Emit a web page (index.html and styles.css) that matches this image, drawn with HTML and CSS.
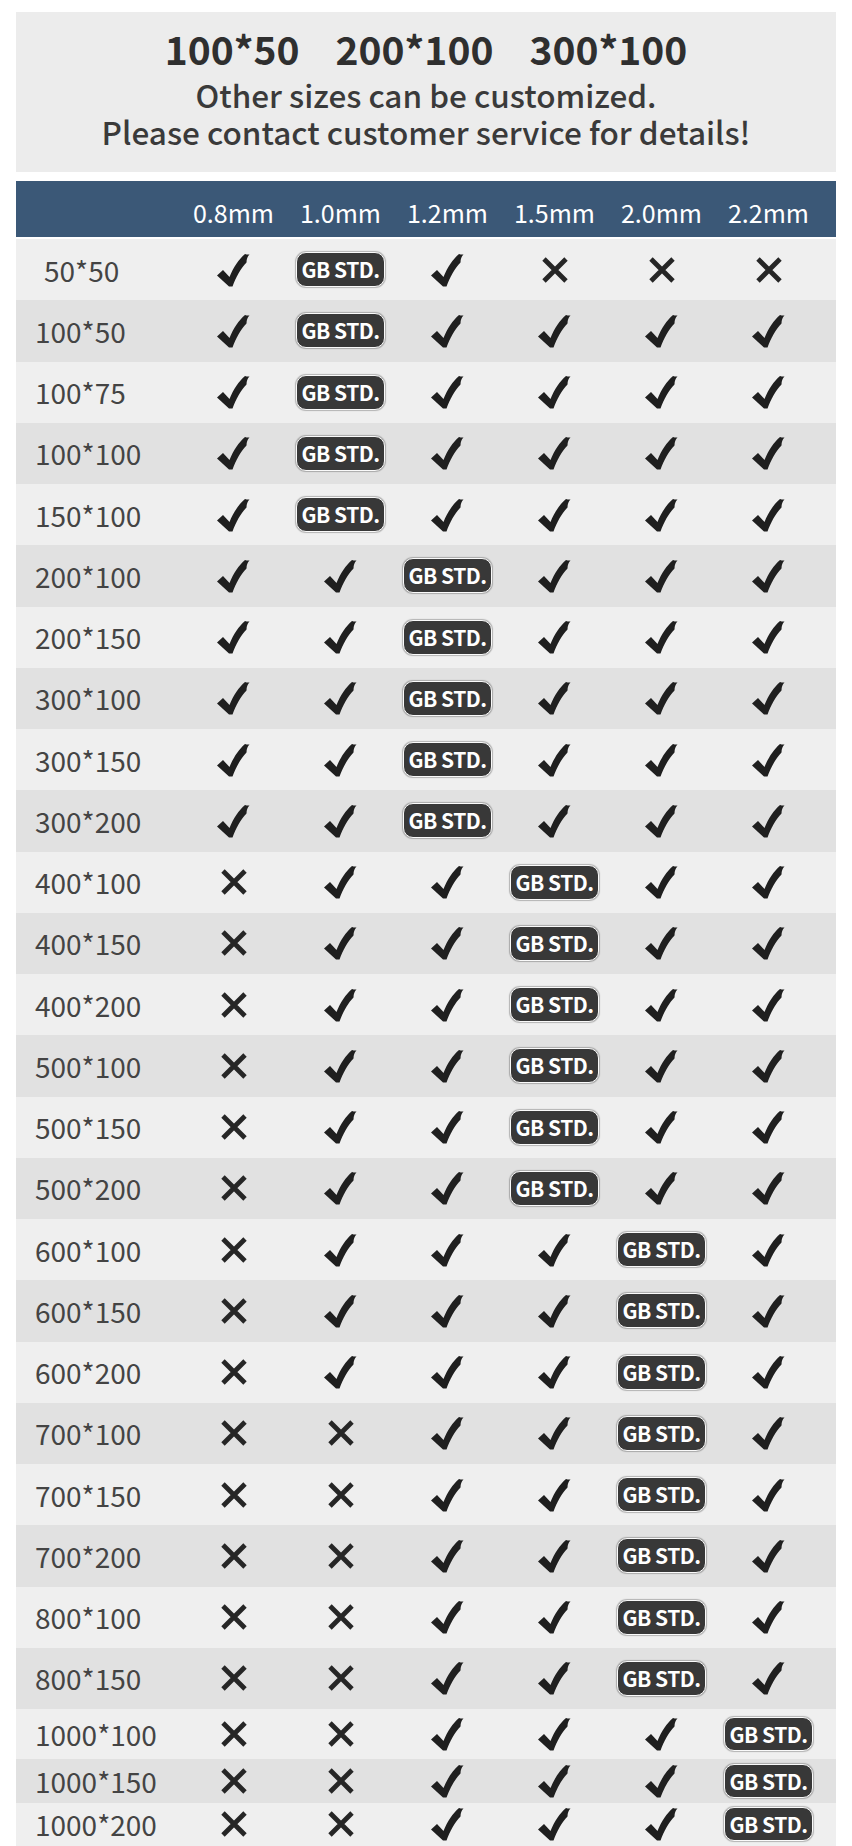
FILE: index.html
```html
<!DOCTYPE html>
<html lang="en">
<head>
    <meta charset="UTF-8">
    <meta name="viewport" content="width=device-width, initial-scale=1.0">
    <title>Size Table</title>
    <link rel="stylesheet" href="styles.css">
</head>
<body>
    <svg class="defs" width="0" height="0">
        <symbol id="ok" viewBox="0 0 33 34">
            <path d="M0 22.5 L6 17 L12.5 24 C16 15 22 6 28 1 C29.5 1.5 31 1.8 32.5 1.5 C30.5 3.5 29.5 6 29.5 9.5 C24 15 19 24 15.5 33.5 L12 33.5 Z" fill="#1f1f1f"/>
        </symbol>
        <symbol id="no" viewBox="0 0 28 28">
            <path d="M3 3 L25 25 M25 3 L3 25" stroke="#262626" stroke-width="4.8" fill="none"/>
        </symbol>
    </svg>

    <div class="intro">
        <div class="sizes"><span>100*50</span><span>200*100</span><span>300*100</span></div>
        <div class="note">Other sizes can be customized.</div>
        <div class="note">Please contact customer service for details!</div>
    </div>

    <div class="table">
        <div class="row head">
            <div></div><div>0.8mm</div><div>1.0mm</div><div>1.2mm</div><div>1.5mm</div><div>2.0mm</div><div>2.2mm</div>
        </div>

        <div class="row">
            <div class="size indent">50*50</div>
            <div><svg class="ic"><use href="#ok"/></svg></div>
            <div><span class="gb">GB STD.</span></div>
            <div><svg class="ic"><use href="#ok"/></svg></div>
            <div><svg class="ic x"><use href="#no"/></svg></div>
            <div><svg class="ic x"><use href="#no"/></svg></div>
            <div><svg class="ic x"><use href="#no"/></svg></div>
        </div>
        <div class="row">
            <div class="size">100*50</div>
            <div><svg class="ic"><use href="#ok"/></svg></div>
            <div><span class="gb">GB STD.</span></div>
            <div><svg class="ic"><use href="#ok"/></svg></div>
            <div><svg class="ic"><use href="#ok"/></svg></div>
            <div><svg class="ic"><use href="#ok"/></svg></div>
            <div><svg class="ic"><use href="#ok"/></svg></div>
        </div>
        <div class="row">
            <div class="size">100*75</div>
            <div><svg class="ic"><use href="#ok"/></svg></div>
            <div><span class="gb">GB STD.</span></div>
            <div><svg class="ic"><use href="#ok"/></svg></div>
            <div><svg class="ic"><use href="#ok"/></svg></div>
            <div><svg class="ic"><use href="#ok"/></svg></div>
            <div><svg class="ic"><use href="#ok"/></svg></div>
        </div>
        <div class="row">
            <div class="size">100*100</div>
            <div><svg class="ic"><use href="#ok"/></svg></div>
            <div><span class="gb">GB STD.</span></div>
            <div><svg class="ic"><use href="#ok"/></svg></div>
            <div><svg class="ic"><use href="#ok"/></svg></div>
            <div><svg class="ic"><use href="#ok"/></svg></div>
            <div><svg class="ic"><use href="#ok"/></svg></div>
        </div>
        <div class="row">
            <div class="size">150*100</div>
            <div><svg class="ic"><use href="#ok"/></svg></div>
            <div><span class="gb">GB STD.</span></div>
            <div><svg class="ic"><use href="#ok"/></svg></div>
            <div><svg class="ic"><use href="#ok"/></svg></div>
            <div><svg class="ic"><use href="#ok"/></svg></div>
            <div><svg class="ic"><use href="#ok"/></svg></div>
        </div>
        <div class="row">
            <div class="size">200*100</div>
            <div><svg class="ic"><use href="#ok"/></svg></div>
            <div><svg class="ic"><use href="#ok"/></svg></div>
            <div><span class="gb">GB STD.</span></div>
            <div><svg class="ic"><use href="#ok"/></svg></div>
            <div><svg class="ic"><use href="#ok"/></svg></div>
            <div><svg class="ic"><use href="#ok"/></svg></div>
        </div>
        <div class="row">
            <div class="size">200*150</div>
            <div><svg class="ic"><use href="#ok"/></svg></div>
            <div><svg class="ic"><use href="#ok"/></svg></div>
            <div><span class="gb">GB STD.</span></div>
            <div><svg class="ic"><use href="#ok"/></svg></div>
            <div><svg class="ic"><use href="#ok"/></svg></div>
            <div><svg class="ic"><use href="#ok"/></svg></div>
        </div>
        <div class="row">
            <div class="size">300*100</div>
            <div><svg class="ic"><use href="#ok"/></svg></div>
            <div><svg class="ic"><use href="#ok"/></svg></div>
            <div><span class="gb">GB STD.</span></div>
            <div><svg class="ic"><use href="#ok"/></svg></div>
            <div><svg class="ic"><use href="#ok"/></svg></div>
            <div><svg class="ic"><use href="#ok"/></svg></div>
        </div>
        <div class="row">
            <div class="size">300*150</div>
            <div><svg class="ic"><use href="#ok"/></svg></div>
            <div><svg class="ic"><use href="#ok"/></svg></div>
            <div><span class="gb">GB STD.</span></div>
            <div><svg class="ic"><use href="#ok"/></svg></div>
            <div><svg class="ic"><use href="#ok"/></svg></div>
            <div><svg class="ic"><use href="#ok"/></svg></div>
        </div>
        <div class="row">
            <div class="size">300*200</div>
            <div><svg class="ic"><use href="#ok"/></svg></div>
            <div><svg class="ic"><use href="#ok"/></svg></div>
            <div><span class="gb">GB STD.</span></div>
            <div><svg class="ic"><use href="#ok"/></svg></div>
            <div><svg class="ic"><use href="#ok"/></svg></div>
            <div><svg class="ic"><use href="#ok"/></svg></div>
        </div>
        <div class="row">
            <div class="size">400*100</div>
            <div><svg class="ic x"><use href="#no"/></svg></div>
            <div><svg class="ic"><use href="#ok"/></svg></div>
            <div><svg class="ic"><use href="#ok"/></svg></div>
            <div><span class="gb">GB STD.</span></div>
            <div><svg class="ic"><use href="#ok"/></svg></div>
            <div><svg class="ic"><use href="#ok"/></svg></div>
        </div>
        <div class="row">
            <div class="size">400*150</div>
            <div><svg class="ic x"><use href="#no"/></svg></div>
            <div><svg class="ic"><use href="#ok"/></svg></div>
            <div><svg class="ic"><use href="#ok"/></svg></div>
            <div><span class="gb">GB STD.</span></div>
            <div><svg class="ic"><use href="#ok"/></svg></div>
            <div><svg class="ic"><use href="#ok"/></svg></div>
        </div>
        <div class="row">
            <div class="size">400*200</div>
            <div><svg class="ic x"><use href="#no"/></svg></div>
            <div><svg class="ic"><use href="#ok"/></svg></div>
            <div><svg class="ic"><use href="#ok"/></svg></div>
            <div><span class="gb">GB STD.</span></div>
            <div><svg class="ic"><use href="#ok"/></svg></div>
            <div><svg class="ic"><use href="#ok"/></svg></div>
        </div>
        <div class="row">
            <div class="size">500*100</div>
            <div><svg class="ic x"><use href="#no"/></svg></div>
            <div><svg class="ic"><use href="#ok"/></svg></div>
            <div><svg class="ic"><use href="#ok"/></svg></div>
            <div><span class="gb">GB STD.</span></div>
            <div><svg class="ic"><use href="#ok"/></svg></div>
            <div><svg class="ic"><use href="#ok"/></svg></div>
        </div>
        <div class="row">
            <div class="size">500*150</div>
            <div><svg class="ic x"><use href="#no"/></svg></div>
            <div><svg class="ic"><use href="#ok"/></svg></div>
            <div><svg class="ic"><use href="#ok"/></svg></div>
            <div><span class="gb">GB STD.</span></div>
            <div><svg class="ic"><use href="#ok"/></svg></div>
            <div><svg class="ic"><use href="#ok"/></svg></div>
        </div>
        <div class="row">
            <div class="size">500*200</div>
            <div><svg class="ic x"><use href="#no"/></svg></div>
            <div><svg class="ic"><use href="#ok"/></svg></div>
            <div><svg class="ic"><use href="#ok"/></svg></div>
            <div><span class="gb">GB STD.</span></div>
            <div><svg class="ic"><use href="#ok"/></svg></div>
            <div><svg class="ic"><use href="#ok"/></svg></div>
        </div>
        <div class="row">
            <div class="size">600*100</div>
            <div><svg class="ic x"><use href="#no"/></svg></div>
            <div><svg class="ic"><use href="#ok"/></svg></div>
            <div><svg class="ic"><use href="#ok"/></svg></div>
            <div><svg class="ic"><use href="#ok"/></svg></div>
            <div><span class="gb">GB STD.</span></div>
            <div><svg class="ic"><use href="#ok"/></svg></div>
        </div>
        <div class="row">
            <div class="size">600*150</div>
            <div><svg class="ic x"><use href="#no"/></svg></div>
            <div><svg class="ic"><use href="#ok"/></svg></div>
            <div><svg class="ic"><use href="#ok"/></svg></div>
            <div><svg class="ic"><use href="#ok"/></svg></div>
            <div><span class="gb">GB STD.</span></div>
            <div><svg class="ic"><use href="#ok"/></svg></div>
        </div>
        <div class="row">
            <div class="size">600*200</div>
            <div><svg class="ic x"><use href="#no"/></svg></div>
            <div><svg class="ic"><use href="#ok"/></svg></div>
            <div><svg class="ic"><use href="#ok"/></svg></div>
            <div><svg class="ic"><use href="#ok"/></svg></div>
            <div><span class="gb">GB STD.</span></div>
            <div><svg class="ic"><use href="#ok"/></svg></div>
        </div>
        <div class="row">
            <div class="size">700*100</div>
            <div><svg class="ic x"><use href="#no"/></svg></div>
            <div><svg class="ic x"><use href="#no"/></svg></div>
            <div><svg class="ic"><use href="#ok"/></svg></div>
            <div><svg class="ic"><use href="#ok"/></svg></div>
            <div><span class="gb">GB STD.</span></div>
            <div><svg class="ic"><use href="#ok"/></svg></div>
        </div>
        <div class="row">
            <div class="size">700*150</div>
            <div><svg class="ic x"><use href="#no"/></svg></div>
            <div><svg class="ic x"><use href="#no"/></svg></div>
            <div><svg class="ic"><use href="#ok"/></svg></div>
            <div><svg class="ic"><use href="#ok"/></svg></div>
            <div><span class="gb">GB STD.</span></div>
            <div><svg class="ic"><use href="#ok"/></svg></div>
        </div>
        <div class="row">
            <div class="size">700*200</div>
            <div><svg class="ic x"><use href="#no"/></svg></div>
            <div><svg class="ic x"><use href="#no"/></svg></div>
            <div><svg class="ic"><use href="#ok"/></svg></div>
            <div><svg class="ic"><use href="#ok"/></svg></div>
            <div><span class="gb">GB STD.</span></div>
            <div><svg class="ic"><use href="#ok"/></svg></div>
        </div>
        <div class="row">
            <div class="size">800*100</div>
            <div><svg class="ic x"><use href="#no"/></svg></div>
            <div><svg class="ic x"><use href="#no"/></svg></div>
            <div><svg class="ic"><use href="#ok"/></svg></div>
            <div><svg class="ic"><use href="#ok"/></svg></div>
            <div><span class="gb">GB STD.</span></div>
            <div><svg class="ic"><use href="#ok"/></svg></div>
        </div>
        <div class="row">
            <div class="size">800*150</div>
            <div><svg class="ic x"><use href="#no"/></svg></div>
            <div><svg class="ic x"><use href="#no"/></svg></div>
            <div><svg class="ic"><use href="#ok"/></svg></div>
            <div><svg class="ic"><use href="#ok"/></svg></div>
            <div><span class="gb">GB STD.</span></div>
            <div><svg class="ic"><use href="#ok"/></svg></div>
        </div>
        <div class="row short first">
            <div class="size">1000*100</div>
            <div><svg class="ic x"><use href="#no"/></svg></div>
            <div><svg class="ic x"><use href="#no"/></svg></div>
            <div><svg class="ic"><use href="#ok"/></svg></div>
            <div><svg class="ic"><use href="#ok"/></svg></div>
            <div><svg class="ic"><use href="#ok"/></svg></div>
            <div><span class="gb">GB STD.</span></div>
        </div>
        <div class="row short">
            <div class="size">1000*150</div>
            <div><svg class="ic x"><use href="#no"/></svg></div>
            <div><svg class="ic x"><use href="#no"/></svg></div>
            <div><svg class="ic"><use href="#ok"/></svg></div>
            <div><svg class="ic"><use href="#ok"/></svg></div>
            <div><svg class="ic"><use href="#ok"/></svg></div>
            <div><span class="gb">GB STD.</span></div>
        </div>
        <div class="row short">
            <div class="size">1000*200</div>
            <div><svg class="ic x"><use href="#no"/></svg></div>
            <div><svg class="ic x"><use href="#no"/></svg></div>
            <div><svg class="ic"><use href="#ok"/></svg></div>
            <div><svg class="ic"><use href="#ok"/></svg></div>
            <div><svg class="ic"><use href="#ok"/></svg></div>
            <div><span class="gb">GB STD.</span></div>
        </div>
    </div>
</body>
</html>
```

FILE: styles.css
```css
body {
    margin: 0;
    padding: 12px 16px 0;
    height: 1846px;
    box-sizing: border-box;
    overflow: hidden;
    background: #fff;
    font-family: "Noto Sans CJK SC", "Noto Sans", sans-serif;
    color: #333;
}
.defs {
    position: absolute;
    width: 0;
    height: 0;
}
.intro {
    height: 160px;
    box-sizing: border-box;
    padding-top: 13px;
    background: #ececec;
    text-align: center;
}
.sizes {
    display: flex;
    justify-content: center;
    gap: 36px;
    height: 46px;
    font-size: 39px;
    font-weight: 600;
    line-height: 46px;
    color: #2f2f2f;
}
.note {
    height: 37px;
    font-size: 31.5px;
    font-weight: 500;
    line-height: 37px;
    color: #3a3a3a;
}
.sizes + .note {
    margin-top: 5px;
}
.table {
    margin-top: 9px;
}
.row {
    display: grid;
    grid-template-columns: 164px repeat(6, 107px);
    align-items: center;
    height: 61.25px;
    background: #efefef;
}
.row > div {
    display: flex;
    justify-content: center;
    align-items: center;
}
.row:nth-child(odd) {
    background: #e1e1e1;
}
.row.head {
    height: 56px;
    margin-bottom: 2px;
    background: #3b5877;
    color: #fff;
    font-size: 25px;
    padding-top: 6px;
    box-sizing: border-box;
}
.row > .size {
    justify-content: flex-start;
    padding-left: 19px;
    font-size: 28px;
    color: #444;
}
.row > .size.indent {
    padding-left: 28px;
}
.ic {
    width: 33px;
    height: 34px;
}
.ic.x {
    width: 28px;
    height: 28px;
}
.gb {
    display: inline-block;
    padding: 0 4px;
    height: 33px;
    line-height: 33px;
    border-radius: 10px;
    background: #383838;
    border: 1px solid #fafafa;
    box-shadow: 0 0 1px 1px rgba(0, 0, 0, 0.25);
    color: #fff;
    font-size: 21px;
    font-weight: 700;
    letter-spacing: -0.5px;
}
.row.short.first {
    height: 50px;
}
.row.short {
    height: 43.5px;
}
.row.short .gb {
    height: 32px;
    line-height: 32px;
}
```
